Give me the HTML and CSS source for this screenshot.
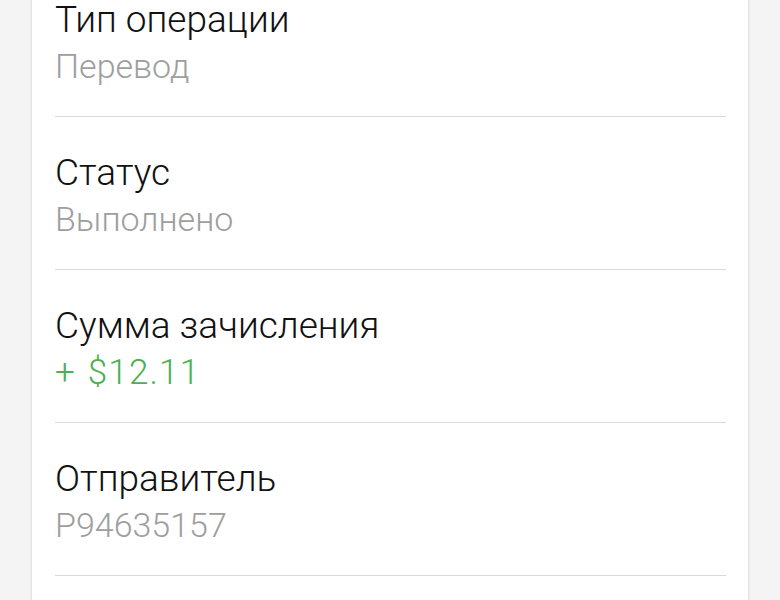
FILE: index.html
```html
<!DOCTYPE html>
<html lang="ru">
<head>
    <meta charset="UTF-8">
    <meta name="viewport" content="width=device-width, initial-scale=1.0">
    <title>Детали операции</title>
    <link rel="stylesheet" href="styles.css">
</head>
<body>
    <div class="card">
        <div class="row">
            <div class="row-title">Тип операции</div>
            <div class="row-value">Перевод</div>
        </div>
        <div class="row">
            <div class="row-title">Статус</div>
            <div class="row-value">Выполнено</div>
        </div>
        <div class="row">
            <div class="row-title">Сумма зачисления</div>
            <div class="row-value income">+ $12.11</div>
        </div>
        <div class="row">
            <div class="row-title">Отправитель</div>
            <div class="row-value">P94635157</div>
        </div>
        <div class="card-rest"></div>
    </div>
</body>
</html>
```

FILE: styles.css
```css
* {
    margin: 0;
    padding: 0;
    box-sizing: border-box;
}

body {
    font-family: Roboto, "Noto Sans", sans-serif;
    background-color: #f4f4f4;
    color: #212121;
    overflow: hidden;
}

.card {
    background-color: #fff;
    margin: -36px 32px 0 32px;
    padding: 0 22px 0 23px;
    box-shadow: 0 0 3px rgba(0, 0, 0, 0.18);
}

.row {
    padding: 32px 0 26px 0;
    border-bottom: 1px solid #d9d9d9;
    font-weight: 300;
    line-height: 47px;
}

.row-title {
    color: #111;
    font-size: 37px;
}

.row-value {
    color: #9e9e9e;
    font-size: 34px;
}

.row-value.income {
    color: #4caf50;
    font-size: 35px;
    letter-spacing: 1.2px;
    word-spacing: 2px;
}

.card-rest {
    height: 80px;
}
```
